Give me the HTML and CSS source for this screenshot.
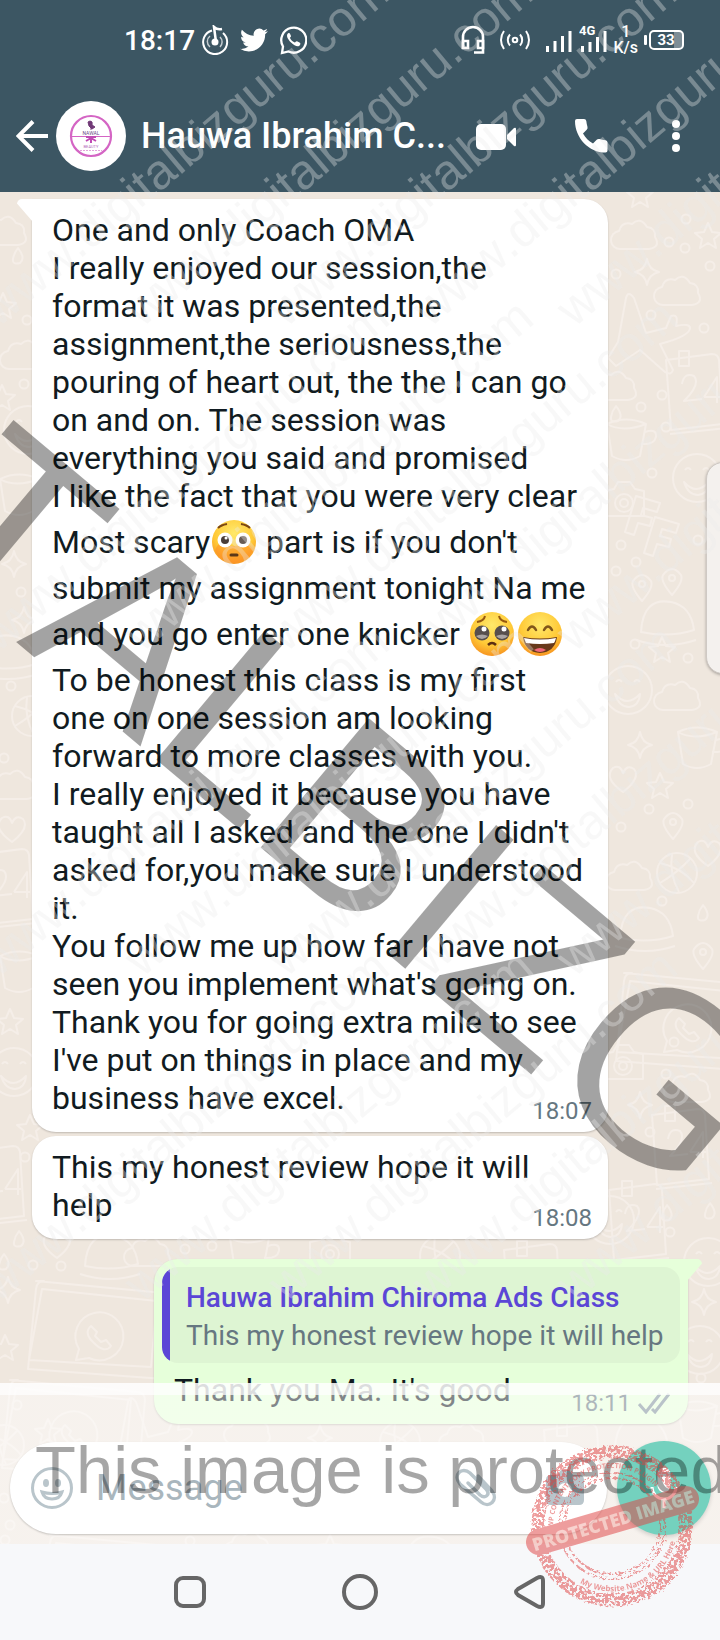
FILE: index.html
```html
<!DOCTYPE html>
<html lang="en">
<head>
    <meta charset="UTF-8">
    <meta name="viewport" content="width=device-width, initial-scale=1.0">
    <title>Hauwa Ibrahim Chiroma Ads Class</title>
    <link rel="stylesheet" href="styles.css">
</head>
<body>
    <div class="screen">
        <header class="header">
            <div class="status">
                <div class="status-left">
                    <span class="clock">18:17</span>
                    <div class="status-apps">
                        <svg width="28" height="30" viewBox="0 0 28 30" fill="none" stroke="#fff" stroke-width="2"><path d="M11 5.500A12 12 0 1 0 22 8"/><path d="M9 11a7 7 0 0 0 0 11M19 12a7 7 0 0 1 0 10" stroke-width="1.500" opacity=".7"/><circle cx="14" cy="17" r="3.500" fill="#fff" stroke="none"/><path d="M15 17L13 2q3 3 8 2" stroke-width="2.500"/></svg>
                        <svg width="28" height="28" viewBox="0 0 24 24" fill="#fff"><path d="M23.950 4.570a10 10 0 0 1-2.820.770 4.960 4.960 0 0 0 2.160-2.720c-.950.550-2 .950-3.130 1.180a4.920 4.920 0 0 0-8.380 4.480C7.690 8.090 4.070 6.130 1.640 3.160a4.820 4.820 0 0 0-.670 2.480c0 1.710.870 3.210 2.190 4.100a4.900 4.900 0 0 1-2.230-.620v.060a4.920 4.920 0 0 0 3.950 4.830 5 5 0 0 1-2.210.080 4.940 4.940 0 0 0 4.600 3.420A9.870 9.870 0 0 1 0 19.540a13.990 13.990 0 0 0 7.560 2.210c9.050 0 14-7.500 14-13.980l-.020-.640a9.940 9.940 0 0 0 2.410-2.560z"/></svg>
                        <svg width="28" height="30" viewBox="0 0 28 30"><path d="M3 28L4 21.500A12.500 12.500 0 1 1 9.500 26.500z" fill="none" stroke="#fff" stroke-width="2.300"/><path d="M9.500 8c-3 2-1 6 2.500 9.500s7.500 5 9 2.500c.800-1.500.400-2-1-2.700l-2-1c-1-.300-1.400.800-2.200 1.200-1.800-.500-4.300-3-4.900-4.800.800-.800 1.300-1.200 1-2l-1-2.200C10.500 7.800 10 7.800 9.500 8z" fill="#fff"/></svg>
                    </div>
                </div>
                <div class="status-right">
                    <svg width="24" height="30" viewBox="0 0 24 30" fill="none" stroke="#fff" stroke-width="2.600"><path d="M2 24V12a10 10 0 0 1 20 0v15.500H13"/><path d="M2 16h5v7H2zM17 16h5v7h-5z"/></svg>
                    <svg width="32" height="24" viewBox="0 0 32 24" fill="none" stroke="#fff" stroke-width="2"><circle cx="16" cy="12" r="2.300"/><path d="M11 6.500a8 8 0 0 0 0 11M21 6.500a8 8 0 0 1 0 11M5 3a15 15 0 0 0 0 18M27 3a15 15 0 0 1 0 18"/></svg>
                    <div class="network">
                        <svg width="28" height="30" viewBox="0 0 28 30" fill="#fff"><path d="M1 21h3v6H1zM8.500 16h3v11h-3zM16 11h3v16h-3zM23.500 6h3v21h-3z"/></svg>
                        <svg width="28" height="30" viewBox="0 0 28 30" fill="#fff"><path d="M2 21h3v6H2zM9.500 17h3v10h-3zM17 12h3v15h-3zM24.500 6h3v21h-3z"/><text class="net-type" x="0" y="10">4G</text></svg>
                        <span class="speed">1<br>K/s</span>
                        <svg width="40" height="20" viewBox="0 0 40 20"><rect x="0" y="5" width="3" height="10" rx="1" fill="#fff"/><rect x="30" y="2" width="8" height="16" fill="#7d8d96"/><rect x="6" y="1" width="33" height="18" rx="4" fill="none" stroke="#fff" stroke-width="2"/><text class="battery" x="22" y="15">33</text></svg>
                    </div>
                </div>
            </div>
            <div class="appbar">
                <button class="icon-button back" aria-label="Back"><svg width="32" height="32" viewBox="0 0 32 32" fill="none" stroke="#fff" stroke-width="4"><path d="M32 16H3M17 1.500L2.500 16 17 30.500"/></svg></button>
                <svg class="avatar" width="70" height="70" viewBox="0 0 70 70">
                    <circle cx="35" cy="35" r="35" fill="#fff"/>
                    <circle cx="35" cy="35" r="20" fill="none" stroke="#d465c4" stroke-width="2.200"/>
                    <path d="M16 35.500h38" stroke="#d465c4"/>
                    <path d="M34 20q3 0 2 4l3 2-3 2-3-3-1-4zM35 25v4" fill="#713a77" stroke="#713a77"/>
                    <path d="M35 36v6M35 37l-5 3M35 37l5 3M30 36h10" stroke="#c04bb4" stroke-width="2"/>
                    <text class="logo-name" x="35" y="34">NAWAL</text>
                    <text class="logo-sub" x="35" y="47">BEAUTY</text>
                    <path d="M24 49.500h22" stroke="#e3a3dc" stroke-dasharray="2 1"/>
                </svg>
                <h1 class="contact">Hauwa Ibrahim C...</h1>
                <nav class="actions">
                    <button class="icon-button" aria-label="Video call"><svg width="40" height="28" viewBox="0 0 40 28" fill="#fff"><rect x="0" y="2" width="30" height="26" rx="5"/><path d="M31 13l7-7q2-1 2 1v16q0 2-2 1l-7-7z"/></svg></button>
                    <button class="icon-button" aria-label="Voice call"><svg width="40" height="36" viewBox="0 0 40 36" fill="#fff"><path d="M5 1h7q2 0 2.300 2 .4 3.500 1.200 6 .4 1.600-.8 2.800L11 15.500c2.500 4.500 5.500 7.500 10 10l3.700-3.700q1.200-1.200 2.800-.7 2.500.9 6 1.200 2 .3 2 2.300v8q0 2-2 2C17 34.600 3 20 3 3q0-2 2-2z"/></svg></button>
                    <button class="icon-button" aria-label="More options"><svg width="16" height="32" viewBox="0 0 16 32" fill="#fff"><circle cx="8" cy="4" r="4"/><circle cx="8" cy="16" r="4"/><circle cx="8" cy="28" r="4"/></svg></button>
                </nav>
            </div>
        </header>

        <main class="chat">
            <svg class="wallpaper" viewBox="0 192 720 1352" preserveAspectRatio="xMidYMin slice" aria-hidden="true">
                <defs>
                    <path id="cloud" d="M-16 12a9 9 0 0 1-2-18q3-10 13-7 8-8 15 3 9 1 8 10 6 10-6 12z"/>
                    <path id="star" d="M0-13l4 9 9 1-7 6 2 9-8-5-8 5 2-9-7-6 9-1z"/>
                    <path id="spark" d="M0-13q2 11 12 13Q2 2 0 13-2 2-12 0-2-2 0-13z"/>
                    <circle id="dot" r="4.500"/>
                    <path id="drop" d="M-1-9q8 10 2 15-8 2-7-4 1-6 5-11z"/>
                    <g id="pin"><path d="M0 15Q-12 1-9-5 0-17 9-5q3 6-9 20z"/><circle cy="-2" r="3"/></g>
                    <g id="ball"><circle r="20"/><path d="M-17-10Q5-5 17 10M-17 10Q0 0 14-15M-5-19q-3 20 7 38"/></g>
                    <g id="cup"><path d="M-20-14L-15 18q14 8 28 0l6-32q-20-9-39 0 16 9 39 0M18-6q12-4 11 5-2 8-15 7"/></g>
                    <g id="smile"><circle r="24"/><path d="M-13 4q12 14 25 0-1 12-11 13-10 0-14-13zM-12-8q3-4 6 0M6-8q3-4 6 0"/></g>
                    <g id="camera"><path d="M-20-12l10-2 4-7h12l5 7 9 2v25h-40z"/><circle r="9"/><circle r="4"/></g>
                    <g id="calendar"><path d="M-26-30l46-6q6 0 7 6l4 64-52 6zM-22 44l56-6M-13-39h10v15h-10zM-10-6q2-12 12-8 7 8-10 25l18-2M12 7l13-20v26M12 7h16"/></g>
                    <path id="plane" d="M0 0L8-44q2-8 8 0l12 35 20-5 5-12q8-3 5 10 14-3 14 2 0 8-30 16l13 26q-2 6-8 2L22 8-2 24l-8-8z"/>
                    <g id="letter"><path d="M-14-20l24 7-3 9-14-4-2 7 11 3-2 8-12-3-4 12-9-3z"/></g>
                    <g id="laptop"><path d="M-60-45l128 12q7 1 7 8l-7 78-136-10 8-80q1-8 8-8zM-54-37l115 12-6 66-122-7z"/><path d="M-20 34l3-11a24 24 0 1 1 10 9z"/><path d="M-5 0q-8 7 3 17 11 11 17 3l-5-6-5 2-6-6 2-4z"/></g>
                    <g id="burger"><path d="M-25 12q2-35 30-30 20 4 23 28-25 8-53 2zM-30 20q30 10 60 0"/></g>
                    <g id="heart"><path d="M0 12Q-20-2-10-12-3-16 0-7 4-16 11-11 18-2 0 12z"/></g>
                </defs>
                <g class="doodles">
                    <use href="#star" x="640" y="195"/><use href="#cloud" x="637" y="237"/><use href="#star" x="708" y="236"/><use href="#spark" x="647" y="272"/><use href="#dot" x="686" y="219"/><use href="#dot" x="669" y="242"/><use href="#dot" x="685" y="248"/><use href="#dot" x="710" y="266"/><use href="#dot" x="616" y="274"/>
                    <use href="#cloud" x="680" y="293"/><use href="#plane" x="618" y="342"/><use href="#dot" x="651" y="315"/><use href="#dot" x="704" y="328"/><use href="#calendar" x="692" y="390"/><use href="#cloud" x="616" y="388"/><use href="#dot" x="641" y="407"/><use href="#dot" x="662" y="395"/><use href="#drop" x="617" y="415"/><use href="#dot" x="666" y="427"/>
                    <use href="#cup" x="627" y="438"/><use href="#smile" x="697" y="478"/><use href="#dot" x="652" y="473"/><use href="#letter" x="650" y="516"/><use href="#letter" x="669" y="537"/><use href="#camera" x="624" y="503"/><use href="#dot" x="621" y="545"/><use href="#dot" x="636" y="562"/><use href="#dot" x="616" y="571"/><use href="#dot" x="698" y="540"/>
                    <use href="#pin" x="642" y="586"/><use href="#pin" x="672" y="580"/><use href="#burger" x="666" y="620"/><use href="#star" x="662" y="650"/><use href="#dot" x="635" y="644"/><use href="#dot" x="688" y="658"/><use href="#smile" x="628" y="690"/><use href="#cloud" x="680" y="698"/><use href="#cup" x="698" y="746"/><use href="#spark" x="640" y="745"/><use href="#heart" x="623" y="780"/>
                    <use href="#star" x="660" y="786"/><use href="#pin" x="673" y="824"/><use href="#dot" x="649" y="809"/><use href="#dot" x="688" y="804"/><use href="#dot" x="621" y="827"/><use href="#ball" x="677" y="873"/><use href="#cloud" x="632" y="878"/><use href="#heart" x="708" y="854"/><use href="#burger" x="645" y="926"/><use href="#pin" x="703" y="954"/><use href="#dot" x="662" y="901"/><use href="#drop" x="704" y="914"/>
                    <use href="#laptop" x="684" y="1018"/><use href="#camera" x="623" y="1066"/><use href="#spark" x="640" y="1105"/><use href="#dot" x="674" y="1042"/><use href="#dot" x="666" y="1074"/><use href="#cloud" x="690" y="1090"/><use href="#dot" x="650" y="1132"/><use href="#smile" x="610" y="1220"/><use href="#calendar" x="635" y="1220"/><use href="#drop" x="668" y="1214"/><use href="#drop" x="711" y="1212"/><use href="#calendar" x="678" y="1145"/>
                    <use href="#dot" x="670" y="1232"/><use href="#smile" x="708" y="1262"/><use href="#smile" x="700" y="1350"/><use href="#dot" x="701" y="1378"/><use href="#spark" x="704" y="1302"/><use href="#cup" x="698" y="1420"/><use href="#burger" x="640" y="1436"/><use href="#cloud" x="465" y="1440"/><use href="#calendar" x="570" y="1460"/><use href="#ball" x="400" y="1442"/><use href="#spark" x="320" y="1438"/><use href="#cloud" x="250" y="1432"/>
                    <use href="#cloud" x="6" y="233"/><use href="#drop" x="19" y="257"/><use href="#star" x="3" y="306"/><use href="#dot" x="27" y="320"/><use href="#cloud" x="26" y="357"/><use href="#dot" x="24" y="384"/><use href="#star" x="2" y="398"/><use href="#smile" x="28" y="430"/><use href="#cup" x="20" y="493"/><use href="#spark" x="14" y="564"/><use href="#dot" x="21" y="592"/><use href="#spark" x="24" y="620"/><use href="#burger" x="8" y="654"/><use href="#dot" x="11" y="686"/><use href="#ball" x="32" y="716"/>
                    <use href="#dot" x="4" y="758"/><use href="#cloud" x="15" y="787"/><use href="#heart" x="12" y="830"/><use href="#calendar" x="2" y="885"/><use href="#cup" x="20" y="970"/><use href="#star" x="10" y="1022"/><use href="#smile" x="14" y="1072"/><use href="#star" x="30" y="1128"/><use href="#dot" x="25" y="1157"/><use href="#calendar" x="-7" y="1182"/><use href="#drop" x="20" y="1240"/><use href="#drop" x="5" y="1263"/><use href="#dot" x="33" y="1265"/><use href="#dot" x="61" y="1266"/>
                    <use href="#burger" x="110" y="1254"/><use href="#cloud" x="150" y="1254"/><use href="#heart" x="57" y="1246"/><use href="#cup" x="250" y="1252"/><use href="#dot" x="185" y="1249"/><use href="#dot" x="212" y="1246"/><use href="#camera" x="330" y="1254"/><use href="#ball" x="440" y="1256"/><use href="#calendar" x="530" y="1280"/>
                    <use href="#laptop" x="96" y="1326"/><use href="#star" x="5" y="1348"/><use href="#spark" x="8" y="1290"/><use href="#laptop" x="70" y="1425"/><use href="#dot" x="17" y="1405"/><use href="#star" x="48" y="1432"/><use href="#ball" x="4" y="1445"/><use href="#plane" x="120" y="1446"/><use href="#dot" x="4" y="1498"/><use href="#dot" x="5" y="1540"/><use href="#laptop" x="110" y="1580"/><use href="#dot" x="190" y="1541"/><use href="#cloud" x="250" y="1548"/><use href="#star" x="330" y="1548"/><use href="#burger" x="430" y="1555"/><use href="#dot" x="10" y="1525"/>
                </g>
            </svg>

            <section class="messages">
                <article class="bubble incoming tailed">
                    <p class="text">One and only Coach OMA<br>I really enjoyed our session,the<br>format it was presented,the<br>assignment,the seriousness,the<br>pouring of heart out, the the I can go<br>on and on. The session was<br>everything you said and promised<br>I like the fact that you were very clear<br>Most scary<svg class="emoji" viewBox="0 0 48 54" role="img" aria-label="flushed face"><use href="#face"/><path d="M5 36q5 10 19 12 14-2 19-12-2-9-9-7-10 4-20 0-7-2-9 7z" fill="#ff8e26" opacity=".55"/><circle cx="15" cy="25" r="7.500" fill="#fff"/><circle cx="33" cy="25" r="7.500" fill="#fff"/><circle cx="15" cy="25" r="4" fill="#493d38"/><circle cx="33" cy="25" r="4" fill="#675b55"/><circle cx="16" cy="23" r="1.500" fill="#fff"/><path d="M8 13q3-3 9-4M31 9q6 1 9 4" fill="none" stroke="#7c4713" stroke-width="2"/><path d="M21 40h6" fill="none" stroke="#5c3818" stroke-width="3" stroke-linecap="round"/></svg> part is if you don't<br>submit my assignment tonight Na me<br>and you go enter one knicker <svg class="emoji" viewBox="0 0 48 54" role="img" aria-label="pleading face"><use href="#face"/><circle cx="14" cy="26" r="7.500" fill="#574f4d"/><circle cx="34" cy="26" r="7.500" fill="#574f4d"/><path d="M8 29q6 6 12 0-6-3-12 0zM28 29q6 6 12 0-6-3-12 0z" fill="#aaa4a3"/><circle cx="16" cy="22" r="2.500" fill="#fff"/><circle cx="36" cy="22" r="2.500" fill="#fff"/><path d="M9 15q7-1 8-6M31 9q1 5 8 6" fill="none" stroke="#96580f" stroke-width="2"/><path d="M20 38q4-4 8 0" fill="none" stroke="#5c2f12" stroke-width="2.500"/></svg><svg class="emoji" viewBox="0 0 48 54" role="img" aria-label="grinning face with smiling eyes"><use href="#face"/><path d="M12 23q4-7 8 0M28 23q4-7 8 0" fill="none" stroke="#80561a" stroke-width="2.500" stroke-linecap="round"/><path d="M7 30q17 3 34 0-2 15-17 16Q9 45 7 30z" fill="#68391b"/><path d="M8 31q16 3 32 0-1 4-2 5-14 2-28 0z" fill="#fff"/><path d="M18 43q6-4 12 0-6 4-12 0z" fill="#f2687a"/></svg><br>To be honest this class is my first<br>one on one session am looking<br>forward to more classes with you.<br>I really enjoyed it because you have<br>taught all I asked and the one I didn't<br>asked for,you make sure I understood<br>it.<br>You follow me up how far I have not<br>seen you implement what's going on.<br>Thank you for going extra mile to see<br>I've put on things in place and my<br>business have excel.</p>
                    <time class="stamp-time">18:07</time>
                </article>
                <article class="bubble incoming">
                    <p class="text">This my honest review hope it will<br>help</p>
                    <time class="stamp-time">18:08</time>
                </article>
                <article class="bubble outgoing tailed">
                    <blockquote class="quote">
                        <strong class="quote-name">Hauwa Ibrahim Chiroma Ads Class</strong>
                        <p class="quote-text">This my honest review hope it will help</p>
                    </blockquote>
                    <div class="reply">
                        <p class="text">Thank you Ma. It's good</p>
                        <time class="stamp-time">18:11 <svg width="32" height="22" viewBox="0 0 32 22" fill="none" stroke="#7b8d99" stroke-width="3"><path d="M1 12l7 8L22 2M14 17l3 3L31 2"/></svg></time>
                    </div>
                </article>
            </section>

            <form class="composer">
                <div class="field">
                    <button type="button" class="icon-button" aria-label="Emoji"><svg width="44" height="44" viewBox="0 0 44 44" fill="none" stroke="#b9c5cb" stroke-width="3"><circle cx="22" cy="22" r="19.500"/><ellipse cx="16" cy="17" rx="3" ry="4" fill="#b9c5cb" stroke="none"/><ellipse cx="28" cy="17" rx="3" ry="4" fill="#b9c5cb" stroke="none"/><path d="M12 26q10 3 20 0-2 7-10 7t-10-7z"/></svg></button>
                    <input class="message-input" type="text" placeholder="Message" aria-label="Message">
                    <button type="button" class="icon-button" aria-label="Attach"><svg width="44" height="40" viewBox="0 0 44 40" fill="none" stroke="#b9c5cb" stroke-width="3.500" stroke-linecap="round"><path d="M24 8l14 15c7 9-3 18-11 11L6 16C-2 7 8-2 16 5l16 16c5 6-1 10-6 6L14 15"/></svg></button>
                    <button type="button" class="icon-button camera" aria-label="Camera"><svg width="38" height="36" viewBox="0 0 38 36"><path d="M5 5h6l4-5h8l4 5h6q5 0 5 5v20q0 5-5 5H5q-5 0-5-5V10q0-5 5-5z" fill="#b9c5cb"/><circle cx="19" cy="20" r="7" fill="#fff"/></svg></button>
                </div>
                <button type="button" class="mic" aria-label="Record voice message"><svg width="32" height="42" viewBox="0 0 32 42" fill="none" stroke="#fff" stroke-width="3"><rect x="11" y="2" width="10" height="22" rx="5" fill="#fff"/><path d="M4 20a12 12 0 0 0 24 0M16 32v9"/></svg></button>
            </form>
            <div class="scroll-handle"></div>
        </main>

        <footer class="navbar">
            <button class="icon-button" aria-label="Recent apps"><svg width="34" height="36" viewBox="0 0 34 36" fill="none" stroke="#666" stroke-width="4"><rect x="3" y="4" width="28" height="28" rx="7"/></svg></button>
            <button class="icon-button" aria-label="Home"><svg width="36" height="36" viewBox="0 0 36 36" fill="none" stroke="#666" stroke-width="4"><circle cx="18" cy="18" r="16"/></svg></button>
            <button class="icon-button" aria-label="Go back"><svg width="34" height="36" viewBox="0 0 34 36" fill="none" stroke="#666" stroke-width="4"><path d="M5 15L24 4q6-3 6 3v22q0 6-6 3L5 21q-4-3 0-6z"/></svg></button>
        </footer>

        <svg class="watermark" viewBox="0 0 720 1640" preserveAspectRatio="xMinYMin slice">
            <defs>
                <radialGradient id="skin" cx=".5" cy=".3" r=".75">
                    <stop offset="0" stop-color="#ffe96b"/>
                    <stop offset=".6" stop-color="#ffc937"/>
                    <stop offset="1" stop-color="#f58a1c"/>
                </radialGradient>
                <circle id="face" cx="24" cy="27" r="22" fill="url(#skin)"/>
                <path id="arc-top" d="M553 1528A59 59 0 0 1 671 1526"/>
                <path id="arc-bottom" d="M580 1583A65 65 0 0 0 677 1526"/>
                <filter id="rough" x="-10%" y="-10%" width="120%" height="120%">
                    <feTurbulence type="fractalNoise" baseFrequency=".35" numOctaves="2" seed="4" result="noise"/>
                    <feDisplacementMap in="SourceGraphic" in2="noise" scale="6" result="edge"/>
                    <feColorMatrix in="noise" type="matrix" values="0 0 0 0 0 0 0 0 0 0 0 0 0 0 0 0 12 0 0 -5" result="holes"/>
                    <feComposite in="edge" in2="holes" operator="in"/>
                </filter>
                <text id="site" class="site" transform="rotate(-40)">www.digitalbizguru.com</text>
                <g id="site-row">
                    <use href="#site" x="-2"/><use href="#site" x="142"/><use href="#site" x="286"/><use href="#site" x="430"/><use href="#site" x="574"/>
                </g>
            </defs>
            <text class="big" transform="translate(16 642) rotate(40)" x="-150">TALBIZG</text>
            <text class="notice" x="35" y="1493">This image is protected</text>
            <use href="#site-row" y="328"/>
            <use href="#site-row" y="653"/>
            <use href="#site-row" y="978"/>
            <use href="#site-row" y="1303"/>
            <g class="seal">
                <circle cx="612" cy="1526" r="74" stroke-width="13" filter="url(#rough)"/>
                <circle cx="612" cy="1526" r="53" stroke-width="2" filter="url(#rough)"/>
                <circle cx="612" cy="1526" r="48" stroke-width="2" filter="url(#rough)"/>
                <path d="M539 1542L686 1499" stroke-width="26" stroke-linecap="round"/>
                <text class="seal-top"><textPath href="#arc-top">WP CONTENT COPY PROTECTION PLUGIN</textPath></text>
                <text class="seal-bottom"><textPath href="#arc-bottom">My Website Name &amp; URL Here</textPath></text>
                <text class="seal-band" transform="translate(615 1527) rotate(-17)">PROTECTED IMAGE</text>
            </g>
        </svg>
    </div>
</body>
</html>
```

FILE: styles.css
```css
* {
    box-sizing: border-box;
}
body {
    margin: 0;
    font-family: Roboto, sans-serif;
    color: #111b21;
}
h1, p, blockquote {
    margin: 0;
}
svg {
    display: block;
    flex-shrink: 0;
}
.screen {
    position: relative;
    display: flex;
    flex-direction: column;
    min-height: 100vh;
    overflow: hidden;
}
.icon-button {
    display: flex;
    padding: 0;
    border: none;
    background: none;
    cursor: pointer;
}

/* header */
.header {
    background: #3c5663;
    color: #fff;
}
.status {
    display: flex;
    align-items: center;
    justify-content: space-between;
    height: 80px;
    padding: 0 36px 0 124px;
}
.status-left, .status-apps, .status-right, .network {
    display: flex;
    align-items: center;
}
.status-left {
    gap: 6px;
}
.status-apps {
    gap: 11px;
}
.status-right {
    gap: 14px;
}
.network {
    gap: 6px;
}
.clock {
    font-size: 28px;
    font-weight: 500;
}
.net-type {
    font-size: 13px;
    font-weight: 700;
}
.speed {
    font-size: 16px;
    font-weight: 500;
    line-height: 16px;
    text-align: center;
}
.battery {
    font-size: 15px;
    font-weight: 700;
    text-anchor: middle;
    fill: #fff;
}
.appbar {
    display: flex;
    align-items: center;
    height: 112px;
    padding: 0 36px 0 16px;
}
.avatar {
    margin-left: 8px;
}
.logo-name, .logo-sub {
    font-size: 5px;
    text-anchor: middle;
    fill: #6b4a86;
}
.logo-sub {
    font-size: 4px;
    fill: #b06bb8;
}
.contact {
    flex: 1;
    margin-left: 15px;
    font-size: 36px;
    font-weight: 500;
    white-space: nowrap;
}
.actions {
    display: flex;
    align-items: center;
    gap: 56px;
}

/* chat */
.chat {
    position: relative;
    display: flex;
    flex: 1;
    flex-direction: column;
    background: #efe7de;
    overflow: hidden;
}
.wallpaper {
    position: absolute;
    inset: 0;
    width: 100%;
    height: 100%;
}
.doodles {
    fill: none;
    stroke: #f5eee8;
    stroke-width: 2;
    stroke-linejoin: round;
}
.messages {
    position: relative;
    display: flex;
    flex-direction: column;
    gap: 4px;
    padding: 7px 32px 0;
}
.bubble {
    position: relative;
    border-radius: 24px;
    box-shadow: 0 1px 2px rgba(0, 0, 0, 0.2);
}
.incoming {
    display: grid;
    margin-right: 80px;
    padding: 12px 16px 15px 20px;
    background: #fff;
}
.incoming.tailed {
    border-top-left-radius: 0;
}
.text {
    grid-area: 1 / 1;
    font-size: 32px;
    line-height: 38px;
    white-space: nowrap;
}
.stamp-time {
    grid-area: 1 / 1;
    place-self: end;
    display: flex;
    align-items: center;
    gap: 7px;
    margin-bottom: -6px;
    font-size: 24px;
    line-height: 24px;
    color: #667781;
}
.emoji {
    display: inline-block;
    width: 48px;
    height: 54px;
    vertical-align: -16px;
}
.tailed::before {
    content: "";
    position: absolute;
    top: 0;
    left: -15px;
    width: 16px;
    height: 23px;
    background: inherit;
    border-top-left-radius: 5px;
    clip-path: polygon(0 0, 100% 0, 100% 100%, 0 20%);
}
.outgoing {
    align-self: flex-end;
    width: 534px;
    max-width: 100%;
    margin-top: 16px;
    padding: 8px 8px 15px;
    background: #e6ffda;
}
.outgoing.tailed {
    border-top-right-radius: 0;
}
.outgoing.tailed::before {
    left: auto;
    right: -14px;
    border-radius: 0 5px 0 0;
    clip-path: polygon(0 0, 100% 0, 100% 20%, 0 100%);
}
.quote {
    padding: 12px 16px 8px 24px;
    border-radius: 16px;
    background: linear-gradient(to right, #5b46d6 8px, #def5d3 8px);
    font-size: 28px;
    line-height: 38px;
    white-space: nowrap;
    overflow: hidden;
}
.quote-name {
    display: block;
    font-weight: 500;
    color: #5b46d6;
}
.quote-text {
    color: #667781;
}
.reply {
    display: grid;
    padding: 8px 10px 0 12px;
}

/* message box */
.composer {
    position: relative;
    display: flex;
    align-items: center;
    justify-content: space-between;
    margin-top: auto;
    padding: 17px 9px 9px 10px;
}
.composer::before {
    content: "";
    position: absolute;
    right: 0;
    bottom: 0;
    left: 0;
    height: 161px;
    background: linear-gradient(rgba(255, 255, 255, 0.85) 12px, rgba(255, 255, 255, 0.47) 12px);
}
.field {
    position: relative;
    display: flex;
    flex: 1;
    align-items: center;
    min-width: 0;
    height: 92px;
    margin-right: 10px;
    padding: 0 23px 0 20px;
    border-radius: 46px;
    background: #fff;
    box-shadow: 0 1px 2px rgba(0, 0, 0, 0.2);
}
.message-input {
    flex: 1;
    min-width: 0;
    margin-left: 22px;
    padding: 0;
    border: none;
    outline: none;
    background: none;
    font: 36px Roboto, sans-serif;
}
.message-input::placeholder {
    color: #a9b6bd;
    opacity: 1;
}
.camera {
    margin-left: 48px;
}
.mic {
    position: relative;
    display: flex;
    flex-shrink: 0;
    align-items: center;
    justify-content: center;
    width: 94px;
    height: 94px;
    padding: 0;
    border: none;
    border-radius: 50%;
    background: #74d1be;
    box-shadow: 0 2px 4px rgba(0, 0, 0, 0.15);
}
.scroll-handle {
    position: absolute;
    top: 270px;
    right: -20px;
    width: 34px;
    height: 212px;
    border: 1px solid #cfc9c4;
    border-radius: 20px;
    background: #f4f1ee;
    box-shadow: 0 1px 3px rgba(0, 0, 0, 0.3);
}

/* system buttons */
.navbar {
    display: flex;
    align-items: center;
    justify-content: center;
    gap: 135px;
    height: 96px;
    background: #f7f8fa;
}

/* marks over the page */
.watermark {
    position: absolute;
    top: 0;
    left: 0;
    width: 100%;
    height: 100%;
    pointer-events: none;
    font-family: "Liberation Sans", Arial, sans-serif;
    font-kerning: none;
}
.site {
    font-size: 49px;
    fill: rgba(235, 235, 235, 0.35);
}
.big {
    font-size: 245px;
    fill: rgba(0, 0, 0, 0.36);
}
.notice {
    font-size: 67px;
    fill: rgba(0, 0, 0, 0.35);
}
.seal {
    fill: none;
    stroke: #e04545;
    opacity: 0.52;
}
.seal-top, .seal-bottom, .seal-band {
    font-family: "Open Sans", sans-serif;
    font-weight: 700;
    stroke: none;
    fill: #e04545;
}
.seal-top {
    font-size: 7px;
}
.seal-bottom {
    font-size: 8px;
}
.seal-band {
    font-size: 18px;
    font-weight: 800;
    text-anchor: middle;
    fill: #f3aaa4;
}
```
